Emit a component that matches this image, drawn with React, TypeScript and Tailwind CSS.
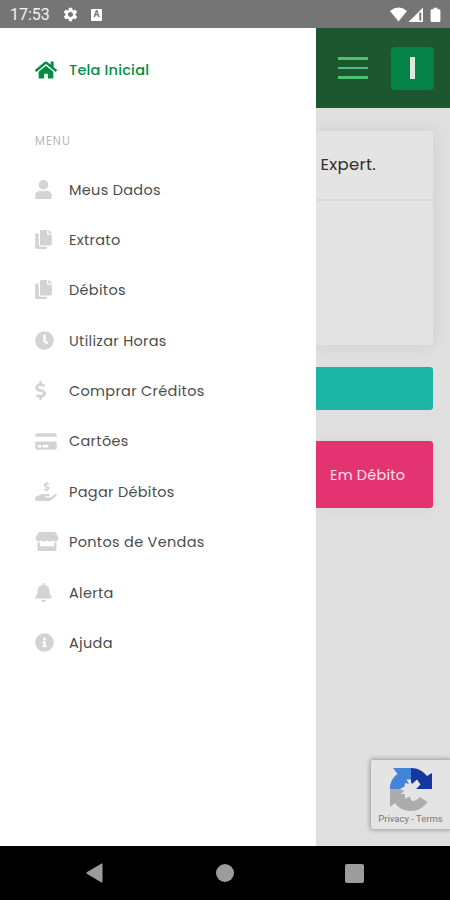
import type { IconType } from "react-icons"
import {
  FaBell,
  FaClock,
  FaCopy,
  FaCreditCard,
  FaDollarSign,
  FaHandHoldingUsd,
  FaHome,
  FaInfoCircle,
  FaStore,
  FaUser,
} from "react-icons/fa"
import { MdSettings } from "react-icons/md"

interface MenuItem {
  label: string
  icon: IconType
  iconWidth: string
}

const menu: MenuItem[] = [
  { label: "Meus Dados", icon: FaUser, iconWidth: "w-[17px]" },
  { label: "Extrato", icon: FaCopy, iconWidth: "w-[17px]" },
  { label: "Débitos", icon: FaCopy, iconWidth: "w-[17px]" },
  { label: "Utilizar Horas", icon: FaClock, iconWidth: "w-[19px]" },
  { label: "Comprar Créditos", icon: FaDollarSign, iconWidth: "w-[11px]" },
  { label: "Cartões", icon: FaCreditCard, iconWidth: "w-[22px]" },
  { label: "Pagar Débitos", icon: FaHandHoldingUsd, iconWidth: "w-[22px]" },
  { label: "Pontos de Vendas", icon: FaStore, iconWidth: "w-[24px]" },
  { label: "Alerta", icon: FaBell, iconWidth: "w-[17px]" },
  { label: "Ajuda", icon: FaInfoCircle, iconWidth: "w-[19px]" },
]

function StatusBar() {
  return (
    <div className="flex h-[28px] shrink-0 items-center bg-[#757575] pl-[10px] pr-[8px] pt-[1px] text-white">
      <span className="w-[52px] font-['Roboto',sans-serif] text-[16px] leading-none text-[#f2f2f2]">17:53</span>
      <MdSettings className="h-[17px] w-[17px]" />
      <span className="ml-[12px] flex h-[12px] w-[11px] items-center justify-center rounded-[1px] bg-white font-['Roboto',sans-serif] text-[9px] font-bold leading-none text-[#757575]">
        A
      </span>
      <svg className="ml-auto h-[16px] w-[52px]" viewBox="0 0 52 16" fill="currentColor">
        <path d="M0 4Q8.500-2.800 17 4L8.500 14.500Z" />
        <path fillRule="evenodd" d="M18.500 15 33 .5V15ZM29.300 5.500V13.500H31.300V5.500Z" />
        <path d="M43.500.7h4v1.600h1.700q1.200 0 1.200 1.200v10.300q0 1.200-1.200 1.200h-7.400q-1.200 0-1.200-1.200V3.500q0-1.200 1.200-1.200h1.700Z" />
      </svg>
    </div>
  )
}

function Drawer() {
  return (
    <aside className="w-[316px] shrink-0 bg-white pl-[35px]">
      <div className="mt-[32px] flex h-[20px] items-center text-[#058c42]">
        <span className="w-[34px]">
          <FaHome className="h-[20px] w-[22px]" />
        </span>
        <span className="pt-[2px] text-[14.5px] font-medium tracking-[0.2px]">Tela Inicial</span>
      </div>
      <p className="mt-[53px] h-[16px] text-[11.5px] leading-[16px] tracking-[1px] text-[#b8b8b8]">MENU</p>
      <nav className="mt-[15px]">
        {menu.map(({ label, icon: Icon, iconWidth }) => (
          <div key={label} className="flex h-[50.4px] items-center text-[#4d4d4d]">
            <span className="w-[34px] shrink-0 text-[#d3d3d3]">
              <Icon className={`h-[19px] ${iconWidth}`} />
            </span>
            <span className="pt-[2.4px] text-[14.5px] tracking-[0.3px]">{label}</span>
          </div>
        ))}
      </nav>
    </aside>
  )
}

function Recaptcha() {
  return (
    <div className="absolute right-0 top-[732px] flex h-[69px] w-[79px] flex-col items-center rounded-l-[2px] bg-[#e4e4e4] pt-[8px] shadow-[0_0_4px_1px_#999]">
      <svg className="h-[43px] w-[42px]" viewBox="0 0 42 43">
        <path fill="#4484d8" d="M0 21C0 14 3 9 7.500 6L3 0H21V11.500L16.500 11.500L19 16L15 15L14.500 18.500L10 21Z" />
        <path fill="#1637a0" d="M21 0C28 0 33 3 37 8L42 5V21H26L30.500 16.500L27 11.500L22 16L21 14Z" />
        <path fill="#acacac" d="M0 21H10L14.500 23L10.500 26L15 26L15 31L19.500 28.500L22 33C26 33 28 31 30 29L37.500 34C33 40 28 43 21 43C14 43 8 40 5 35L0 39Z" />
      </svg>
      <span className="mt-[2px] whitespace-nowrap font-['Roboto',sans-serif] text-[9.500px] leading-[12px] text-[#777]">
        Privacy - Terms
      </span>
    </div>
  )
}

function Page() {
  return (
    <main className="min-w-0 flex-1 overflow-hidden bg-[#dfdfdf]">
      <header className="flex h-[80px] items-center bg-[#1d5730] pl-[22px]">
        <div className="flex w-[30px] flex-col gap-[7px]">
          <span className="h-[2.500px] bg-[#4cc474]" />
          <span className="h-[2.500px] bg-[#4cc474]" />
          <span className="h-[2.500px] bg-[#4cc474]" />
        </div>
        <div className="ml-[23px] flex h-[43px] w-[43px] items-center justify-center rounded-[4px] bg-[#058248]">
          <span className="h-[22px] w-[5px] bg-[#dce9df]" />
        </div>
      </header>
      <div className="flex flex-col pr-[17px] pt-[23px]">
        <section className="h-[214px] rounded-r-[3px] bg-[#e4e4e4] shadow-[0_0_16px_rgba(0,0,0,0.08)]">
          <div className="flex h-[70px] items-center justify-end overflow-hidden border-b-2 border-[#dadada] pr-[57px]">
            <span className="whitespace-nowrap text-[16.5px] tracking-[0.3px] text-[#303030]">a Expert.</span>
          </div>
        </section>
        <div className="mt-[22px] h-[43px] rounded-r-[3px] bg-[#1cb5a5]" />
        <div className="mt-[31px] flex h-[67px] items-center rounded-r-[3px] bg-[#e33371] pl-[14px] pt-[2px] shadow-[0_0_10px_rgba(0,0,0,0.05)]">
          <span className="whitespace-nowrap text-[14.5px] tracking-[0.2px] text-[#fbe3ec]">Em Débito</span>
        </div>
      </div>
    </main>
  )
}

function NavigationBar() {
  return (
    <div className="flex h-[54px] shrink-0 items-center justify-between bg-black pl-[86px] pr-[86px]">
      <svg className="h-[20px] w-[17px]" viewBox="0 0 17 20" fill="#9c9c9c">
        <path d="M.8 9.300 15.500.6q1-.5 1 .6v17.600q0 1.100-1 .6L.8 10.700q-1-.7 0-1.400Z" />
      </svg>
      <span className="ml-[2px] h-[18px] w-[18px] rounded-full bg-[#9c9c9c]" />
      <span className="h-[19px] w-[19px] rounded-[2px] bg-[#9c9c9c]" />
    </div>
  )
}

export default function App() {
  return (
    <div className="flex h-[900px] w-[450px] flex-col overflow-hidden font-['Poppins','Inter',sans-serif]">
      <StatusBar />
      <div className="relative flex min-h-0 flex-1 overflow-hidden">
        <Drawer />
        <Page />
        <Recaptcha />
      </div>
      <NavigationBar />
    </div>
  )
}
